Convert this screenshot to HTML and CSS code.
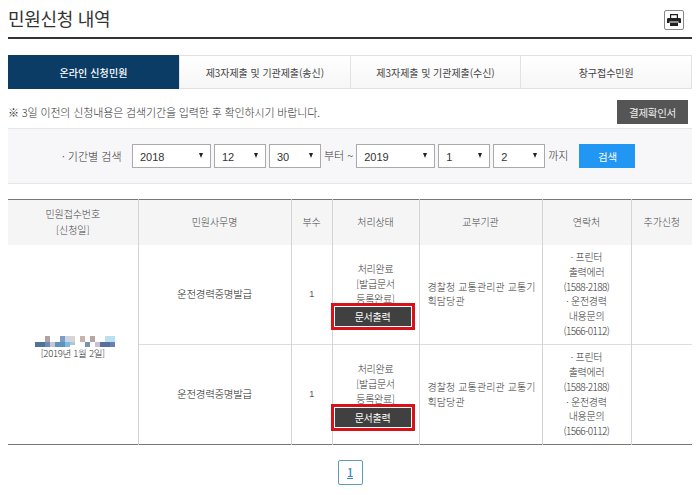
FILE: index.html
```html
<!DOCTYPE html>
<html lang="ko">
<head>
<meta charset="utf-8">
<title>민원신청 내역</title>
<link rel="stylesheet" href="styles.css">
</head>
<body>
<header class="head">
  <h1 class="title">민원신청 내역</h1>
  <button class="print" aria-label="인쇄">
    <svg width="14" height="12" viewBox="0 0 14 12"><path fill="#fff" stroke="#222" stroke-width="1.200" d="M3.600 .6H10.400V5H3.600Z"/><path fill="#222" d="M1.300 4H12.700A1.300 1.300 0 0 1 14 5.300V9H11.500V7.500H2.500V9H0V5.300A1.300 1.300 0 0 1 1.300 4Z"/><path fill="#222" d="M3 8.500H11V12H3Z"/></svg>
  </button>
</header>
<nav class="tabs">
  <a class="tab on">온라인 신청민원</a>
  <a class="tab">제3자제출 및 기관제출(송신)</a>
  <a class="tab">제3자제출 및 기관제출(수신)</a>
  <a class="tab">창구접수민원</a>
</nav>
<div class="notice">
  <p class="note">※ 3일 이전의 신청내용은 검색기간을 입력한 후 확인하시기 바랍니다.</p>
  <button class="confirm">결제확인서</button>
</div>
<form class="search">
  <span class="label">· 기간별 검색</span>
  <span class="sel w79">2018</span>
  <span class="sel w52">12</span>
  <span class="sel w52">30</span>
  <span class="word">부터 ~</span>
  <span class="sel w79">2019</span>
  <span class="sel w52">1</span>
  <span class="sel w52">2</span>
  <span class="word">까지</span>
  <button class="go" type="button">검색</button>
</form>
<table class="list">
  <colgroup>
    <col class="c1"><col class="c2"><col class="c3"><col class="c4"><col class="c5"><col class="c6"><col class="c7">
  </colgroup>
  <thead>
    <tr>
      <th>민원접수번호<br>[신청일]</th><th>민원사무명</th><th>부수</th><th>처리상태</th><th>교부기관</th><th>연락처</th><th>추가신청</th>
    </tr>
  </thead>
  <tbody>
    <tr>
      <td rowspan="2" class="first">
        <svg class="mosaic" width="80" height="11" viewBox="0 0 80 11" shape-rendering="crispEdges">
          <rect x="0" y="6" width="10" height="5" fill="#4f7399"/><rect x="10" y="6" width="5" height="5" fill="#6d8db5"/><rect x="10" y="0" width="5" height="6" fill="#b0a3a5"/><rect x="15" y="6" width="5" height="5" fill="#c9c5d2"/><rect x="20" y="6" width="10" height="5" fill="#5d92bd"/><rect x="25" y="0" width="5" height="6" fill="#7d9cc4"/><rect x="30" y="6" width="5" height="5" fill="#7fb8e0"/><rect x="30" y="0" width="5" height="6" fill="#c9d6e6"/><rect x="35" y="0" width="5" height="6" fill="#d9d4cf"/><rect x="35" y="6" width="5" height="3" fill="#a9c8dc"/>
          <rect x="45" y="0" width="5" height="6" fill="#c9b2ac"/><rect x="50" y="6" width="5" height="5" fill="#7d90ac"/><rect x="55" y="0" width="5" height="6" fill="#b9a4a2"/><rect x="60" y="6" width="5" height="5" fill="#c9c0d5"/><rect x="65" y="6" width="10" height="5" fill="#56709c"/><rect x="70" y="0" width="10" height="6" fill="#b8e0f0"/><rect x="75" y="6" width="5" height="5" fill="#6c7fae"/>
        </svg>
        <div class="date">[2019년 1월 2일]</div>
      </td>
      <td class="name">운전경력증명발급</td>
      <td class="small">1</td>
      <td>처리완료<br>[발급문서<br>등록완료]<button class="doc">문서출력</button></td>
      <td class="org">경찰청 교통관리관 교통기획담당관</td>
      <td>· 프린터<br>출력에러<br><span class="tel">(1588-2188)</span><br>· 운전경력<br>내용문의<br><span class="tel">(1566-0112)</span></td>
      <td></td>
    </tr>
    <tr>
      <td class="name">운전경력증명발급</td>
      <td class="small">1</td>
      <td>처리완료<br>[발급문서<br>등록완료]<button class="doc">문서출력</button></td>
      <td class="org">경찰청 교통관리관 교통기획담당관</td>
      <td>· 프린터<br>출력에러<br><span class="tel">(1588-2188)</span><br>· 운전경력<br>내용문의<br><span class="tel">(1566-0112)</span></td>
      <td></td>
    </tr>
  </tbody>
</table>
<div class="pager"><a class="page">1</a></div>
</body>
</html>
```
FILE: styles.css
```css
* { box-sizing: border-box; }
html, body { margin: 0; padding: 0; }
body {
  width: 700px;
  height: 495px;
  overflow: hidden;
  padding: 0 8px;
  background: #fff;
  color: #333;
  font-family: "Noto Sans CJK KR", "Noto Sans", sans-serif;
  font-size: 10px;
  font-weight: 300;
  letter-spacing: -0.3px;
}
button { font-family: inherit; font-weight: inherit; letter-spacing: inherit; cursor: pointer; }

.head {
  height: 39px;
  border-bottom: 2px solid #333;
  display: flex;
  justify-content: space-between;
  align-items: flex-start;
}
.title {
  margin: 5px 0 0;
  font-size: 18px;
  line-height: 26px;
  font-weight: 400;
  color: #333;
  letter-spacing: -0.3px;
}
.print {
  margin: 10px 8px 0 0;
  width: 20px;
  height: 20px;
  padding: 0;
  border: 1px solid #888;
  border-radius: 2px;
  background: #fff;
  display: flex;
  align-items: center;
  justify-content: center;
}

.tabs {
  margin-top: 16px;
  height: 34px;
  display: flex;
  border: 1px solid #e2e2e2;
  background: linear-gradient(#fff, #f6f6f6);
}
.tab {
  flex: 1 1 0;
  display: flex;
  align-items: center;
  justify-content: center;
  font-size: 10px;
  font-weight: 400;
  letter-spacing: -0.05px;
  color: #444;
  border-left: 1px solid #e2e2e2;
}
.tab.on {
  flex: 0 0 171px;
  margin: -1px 0 -1px -1px;
  background: #0b3c66;
  color: #fff;
  font-weight: 500;
  letter-spacing: 0.1px;
  border-left: 0;
}

.notice {
  height: 39px;
  padding-right: 4px;
  display: flex;
  justify-content: space-between;
  align-items: flex-start;
}
.note {
  margin: 15px 0 0;
  font-size: 11px;
  line-height: 17px;
  letter-spacing: -0.15px;
}
.confirm {
  margin-top: 11px;
  width: 71px;
  height: 24px;
  padding: 0;
  border: 0;
  background: #555;
  color: #eee;
  font-size: 10.500px;
  font-weight: 400;
}

.search {
  height: 56px;
  border-top: 1px solid #e6e6e6;
  border-bottom: 1px solid #e6e6e6;
  background: #f7f7f9;
  display: flex;
  align-items: center;
  font-size: 11px;
}
.label { margin-left: 54px; width: 70px; letter-spacing: 0; }
.sel {
  position: relative;
  height: 24px;
  margin-right: 3px;
  padding-left: 7px;
  border: 1px solid #aaa;
  background: #fff;
  color: #333;
  font-family: "Liberation Sans", sans-serif;
  font-size: 11px;
  font-weight: 400;
  letter-spacing: 0;
  line-height: 24px;
}
.sel::after {
  content: "";
  position: absolute;
  right: 7px;
  top: 8px;
  border-left: 2.500px solid transparent;
  border-right: 2.500px solid transparent;
  border-top: 5px solid #222;
}
.w79 { width: 79px; }
.w52 { width: 52px; }
.word { margin-right: 3px; letter-spacing: 0; padding-bottom: 3px; }
.go {
  margin-left: 8px;
  width: 56px;
  height: 24px;
  padding: 0;
  border: 0;
  background: #2196f3;
  color: #fff;
  font-size: 10.500px;
  font-weight: 400;
}

.list {
  margin-top: 15px;
  width: 684px;
  table-layout: fixed;
  border-collapse: collapse;
  border-top: 1px solid #777;
  border-bottom: 1px solid #777;
  text-align: center;
}
.c1 { width: 130px; } .c2 { width: 153px; } .c3 { width: 41px; } .c4 { width: 87px; }
.c5 { width: 123px; } .c6 { width: 89px; } .c7 { width: 61px; }
th {
  height: 45px;
  padding: 0;
  background: #f5f5f5;
  font-weight: 300;
  line-height: 16px;
  letter-spacing: -0.1px;
  color: #444;
  border-left: 1px solid #d4d4d4;
}
th:first-child { border-left: 0; }
td {
  height: 100px;
  padding: 0;
  line-height: 14.700px;
  color: #333;
  border-left: 1px solid #d4d4d4;
  border-top: 1px solid #ddd;
}
.list tbody tr:first-child td { border-top: 0; }
td.first { border-left: 0; padding-top: 8px; }
.mosaic { display: block; margin-left: 27px; }
.date { line-height: 13px; font-size: 9.500px; }
.name { font-size: 10.500px; color: #222; }
.small { font-family: "Liberation Sans", sans-serif; font-size: 9px; font-weight: 400; color: #555; }
.org { text-align: left; padding: 0 2px 0 8px; letter-spacing: 0.1px; }
.tel { letter-spacing: -0.6px; }
.doc {
  display: block;
  width: 78px;
  height: 21px;
  margin: 0 0 -1px 1px;
  padding: 0;
  border: 1px solid #fff;
  outline: 3px solid #d9121a;
  background: #404040;
  color: #fff;
  font-size: 10px;
  font-weight: 400;
  line-height: 17px;
}

.pager { display: flex; justify-content: center; margin-top: 15px; }
.page {
  width: 25px;
  height: 25px;
  border: 1px solid #5d9cb8;
  border-radius: 2px;
  color: #3c86b0;
  font-size: 11px;
  font-weight: 500;
  line-height: 23px;
  text-align: center;
  text-decoration: underline;
}
```
